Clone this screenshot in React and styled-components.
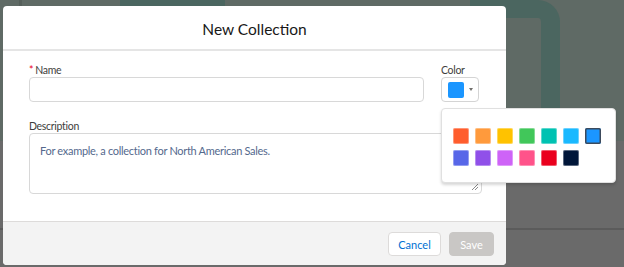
import React from "react";
import styled, { createGlobalStyle } from "styled-components";

const GlobalStyle = createGlobalStyle`
    html, body {
        margin: 0;
        padding: 0;
        width: 624px;
        height: 267px;
        overflow: hidden;
        font-family: "Lato", "Open Sans", sans-serif;
    }
    * {
        box-sizing: border-box;
    }
`;

const swatches = [
    "#ff5d2d", "#ff9a3c", "#ffc200", "#41c75a", "#00c2b2", "#1ab9ff", "#1b96ff",
    "#5867e8", "#9050e9", "#ce63f7", "#ff538a", "#ea001e", "#001639",
];

// the page behind the dimmed overlay, only its edges show
const Backdrop = styled.div`
    position: relative;
    width: 624px;
    height: 267px;
    padding: 6px 0 0 3px;
    background:
        linear-gradient(#5b5b5b, #5b5b5b) 0 228px / 100% 2px no-repeat,
        linear-gradient(#4b6660, #4b6660) 120px 0 / 105px 6px no-repeat,
        linear-gradient(#555f5a, #555f5a) 19px 0 / 3px 6px no-repeat,
        linear-gradient(#5f6a65, #5f6a65) 0 0 / 100% 141px no-repeat,
        #6a6a6a;

    &::before {
        content: "";
        position: absolute;
        left: 470px;
        top: 0;
        width: 71px;
        height: 104px;
        border: solid #4b6660;
        border-width: 18px 19px 7px 0;
        border-radius: 0 22px 22px 0;
    }
`;

const Modal = styled.div`
    position: relative;
    width: 503px;
    height: 259px;
    background: #fff;
    border-radius: 4px;
    display: flex;
    flex-direction: column;
`;

const Header = styled.div`
    height: 45px;
    display: flex;
    align-items: center;
    justify-content: center;
    border-bottom: 2px solid #e5e5e5;
`;

const Title = styled.h2`
    margin: 0;
    font-size: 15.5px;
    font-weight: 400;
    color: #181818;
    padding-top: 2px;
`;

const Body = styled.div`
    flex: 1;
    padding: 13px 24px 0 26px;
    display: flex;
    flex-direction: column;
    gap: 18px;
`;

const Row = styled.div`
    display: flex;
    align-items: flex-end;
    gap: 17px;
    padding-right: 3px;
`;

const Field = styled.div`
    position: relative;
    display: flex;
    flex-direction: column;
    flex: ${(p) => (p.grow ? 1 : "none")};
`;

const Label = styled.label`
    font-size: 10.5px;
    letter-spacing: -0.3px;
    color: #3e3e3c;
    line-height: 12px;
    margin-bottom: 1px;
`;

const Required = styled.abbr`
    color: #ea001e;
    text-decoration: none;
    margin-right: 2px;
`;

const TextInput = styled.div`
    height: 25px;
    border: 1px solid #d8d8d8;
    border-radius: 4px;
    background: #fff;
`;

const ColorButton = styled.button`
    width: 38px;
    height: 25px;
    border: 1px solid #d4d4d4;
    border-radius: 4px;
    background: #fff;
    padding: 0 0 0 6px;
    display: flex;
    align-items: center;
    gap: 5px;
`;

const Chip = styled.span`
    width: 16px;
    height: 16px;
    border-radius: 2px;
    background: ${(p) => p.color};
`;

const Caret = styled.span`
    width: 0;
    height: 0;
    border-left: 2.5px solid transparent;
    border-right: 2.5px solid transparent;
    border-top: 3px solid #706e6b;
`;

const TextArea = styled.div`
    height: 61px;
    border: 1px solid #d8d8d8;
    border-radius: 4px;
    padding: 10px 10px;
    font-size: 11px;
    letter-spacing: -0.3px;
    color: #54698d;
    position: relative;
`;

const Grip = styled.svg`
    position: absolute;
    right: 2px;
    bottom: 2px;
`;

const Popover = styled.div`
    position: absolute;
    top: 44px;
    left: 0;
    width: 175px;
    padding: 19px 14px 16px 11px;
    background: #fff;
    border: 1px solid #e0e0e0;
    border-radius: 4px;
    box-shadow: 0 2px 3px rgba(0, 0, 0, 0.16);
    display: grid;
    grid-template-columns: repeat(7, 16px);
    gap: 6px;
    z-index: 2;
`;

const Swatch = styled.span`
    width: 16px;
    height: 16px;
    border-radius: 2px;
    background: ${(p) => p.color};
    box-shadow: ${(p) =>
        p.selected ? "inset 0 0 0 1.5px #3c4a5c" : "inset 0 0 0 1px rgba(255,255,255,0.35)"};
`;

const Footer = styled.div`
    height: 44px;
    background: #f3f3f3;
    border-top: 1px solid #dddbda;
    border-radius: 0 0 4px 4px;
    display: flex;
    justify-content: flex-end;
    align-items: flex-start;
    padding: 10px 12px 0 0;
    gap: 8px;
`;

const Button = styled.button`
    height: 24px;
    width: ${(p) => (p.primary ? "45px" : "53px")};
    padding: 0;
    border-radius: 4px;
    font-family: inherit;
    font-size: 11px;
    border: 1px solid ${(p) => (p.primary ? "#c9c7c5" : "#dddbda")};
    background: ${(p) => (p.primary ? "#c9c7c5" : "#fff")};
    color: ${(p) => (p.primary ? "#fff" : "#0070d2")};
`;

export default function App() {
    return (
        <>
            <GlobalStyle />
            <Backdrop>
                <Modal>
                    <Header>
                        <Title>New Collection</Title>
                    </Header>
                    <Body>
                        <Row>
                            <Field grow>
                                <Label>
                                    <Required>*</Required>Name
                                </Label>
                                <TextInput />
                            </Field>
                            <Field>
                                <Label>Color</Label>
                                <ColorButton>
                                    <Chip color="#1b96ff" />
                                    <Caret />
                                </ColorButton>
                                <Popover>
                                    {swatches.map((c, i) => (
                                        <Swatch key={c} color={c} selected={i === 6} />
                                    ))}
                                </Popover>
                            </Field>
                        </Row>
                        <Field>
                            <Label>Description</Label>
                            <TextArea>
                                For example, a collection for North American Sales.
                                <Grip width="8" height="8" viewBox="0 0 8 8">
                                    <path d="M7 1L1 7M7 4L4 7" stroke="#8a8a8a" strokeWidth="1" />
                                </Grip>
                            </TextArea>
                        </Field>
                    </Body>
                    <Footer>
                        <Button>Cancel</Button>
                        <Button primary>Save</Button>
                    </Footer>
                </Modal>
            </Backdrop>
        </>
    );
}
